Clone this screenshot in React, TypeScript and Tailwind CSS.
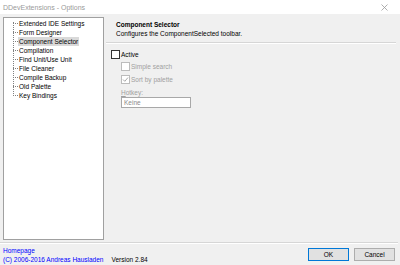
import React from 'react'

const items = [
  'Extended IDE Settings',
  'Form Designer',
  'Component Selector',
  'Compilation',
  'Find Unit/Use Unit',
  'File Cleaner',
  'Compile Backup',
  'Old Palette',
  'Key Bindings',
]

function Box({ checked, disabled }: { checked?: boolean; disabled?: boolean }) {
  return (
    <span
      className={`w-[9px] h-[9px] bg-white border flex items-center justify-center shrink-0 ${
        disabled ? 'border-[#bcbcbc]' : 'border-[#333333]'
      }`}
    >
      {checked && (
        <svg width="7" height="7" viewBox="0 0 7 7">
          <path d="M1 3.5 L2.8 5.3 L6 1.5" fill="none" stroke="#a8a8a8" strokeWidth="1" />
        </svg>
      )}
    </span>
  )
}

export default function App() {
  return (
    <div
      className="w-[400px] h-[265px] flex flex-col bg-[#f0f0f0] text-[6.5px] leading-[9px] text-black overflow-hidden"
      style={{ fontFamily: '"Liberation Sans", Arial, sans-serif' }}
    >
      {/* title bar */}
      <div className="h-[14px] bg-white flex items-center justify-between pl-[3px] pr-[12px] shrink-0">
        <span className="text-[7px] text-[#9a9a9a]">DDevExtensions - Options</span>
        <svg width="7" height="7" viewBox="0 0 7 7">
          <path d="M0.5 0.5 L6.5 6.5 M6.5 0.5 L0.5 6.5" stroke="#9a9a9a" strokeWidth="0.8" />
        </svg>
      </div>

      <div className="flex flex-1 pl-[3px] pr-[4px] min-h-0">
        {/* tree */}
        <div className="w-[101px] mt-[3px] mb-[2px] bg-white border border-[#a0a0a0] pt-[1px] relative">
          <div className="absolute left-[9px] top-[4px] h-[72px] border-l border-dotted border-[#808080]" />
          {items.map((it) => (
            <div key={it} className="flex items-center h-[9px] pl-[9px]">
              <span className="w-[5px] border-t border-dotted border-[#808080]" />
              <span
                className={`px-[1px] ${it === 'Component Selector' ? 'bg-[#d9d9d9]' : ''}`}
              >
                {it}
              </span>
            </div>
          ))}
        </div>

        {/* right */}
        <div className="flex-1 flex flex-col pl-[2px]">
          <div className="h-[28px] pl-[10px] pt-[6px] shrink-0">
            <div className="font-bold">Component Selector</div>
            <div>Configures the ComponentSelected toolbar.</div>
          </div>
          <div className="h-[2px] bg-[#d6d6d6] border-b border-white shrink-0" />
          <div className="pl-[5px] pt-[5px] flex flex-col">
            <div className="flex items-center gap-[1px] h-[10px]">
              <Box />
              <span>Active</span>
            </div>
            <div className="pl-[10px] pt-[3px] flex flex-col gap-[4px]">
              <div className="flex items-center gap-[1px] h-[9px] text-[#a0a0a0]">
                <Box disabled />
                <span>Simple search</span>
              </div>
              <div className="flex items-center gap-[1px] h-[9px] text-[#a0a0a0]">
                <Box checked disabled />
                <span>Sort by palette</span>
              </div>
              <div className="flex flex-col">
                <span className="text-[#a0a0a0]">
                  <span className="underline">H</span>otkey:
                </span>
                <div className="w-[70px] h-[11px] bg-white border border-[#a8a8a8] text-[#8a8a8a] pl-[2px] flex items-center">
                  Keine
                </div>
              </div>
            </div>
          </div>
        </div>
      </div>

      {/* bottom separator */}
      <div className="h-[2px] bg-[#d6d6d6] border-b border-white mr-[2px] shrink-0" />

      {/* footer */}
      <div className="h-[21px] flex items-start justify-between pl-[3px] pr-[5px] pt-[2px] shrink-0">
        <div className="flex flex-col">
          <span className="text-[#0000ff]">Homepage</span>
          <div className="flex gap-[8px]">
            <span className="text-[#0000ff]">(C) 2006-2016 Andreas Hausladen</span>
            <span>Version 2.84</span>
          </div>
        </div>
        <div className="flex gap-[5px] pt-[2px]">
          <button className="w-[41px] h-[13px] bg-[#e1e1e1] border border-[#0078d7] flex items-center justify-center">
            OK
          </button>
          <button className="w-[41px] h-[13px] bg-[#e1e1e1] border border-[#adadad] flex items-center justify-center">
            Cancel
          </button>
        </div>
      </div>
    </div>
  )
}
